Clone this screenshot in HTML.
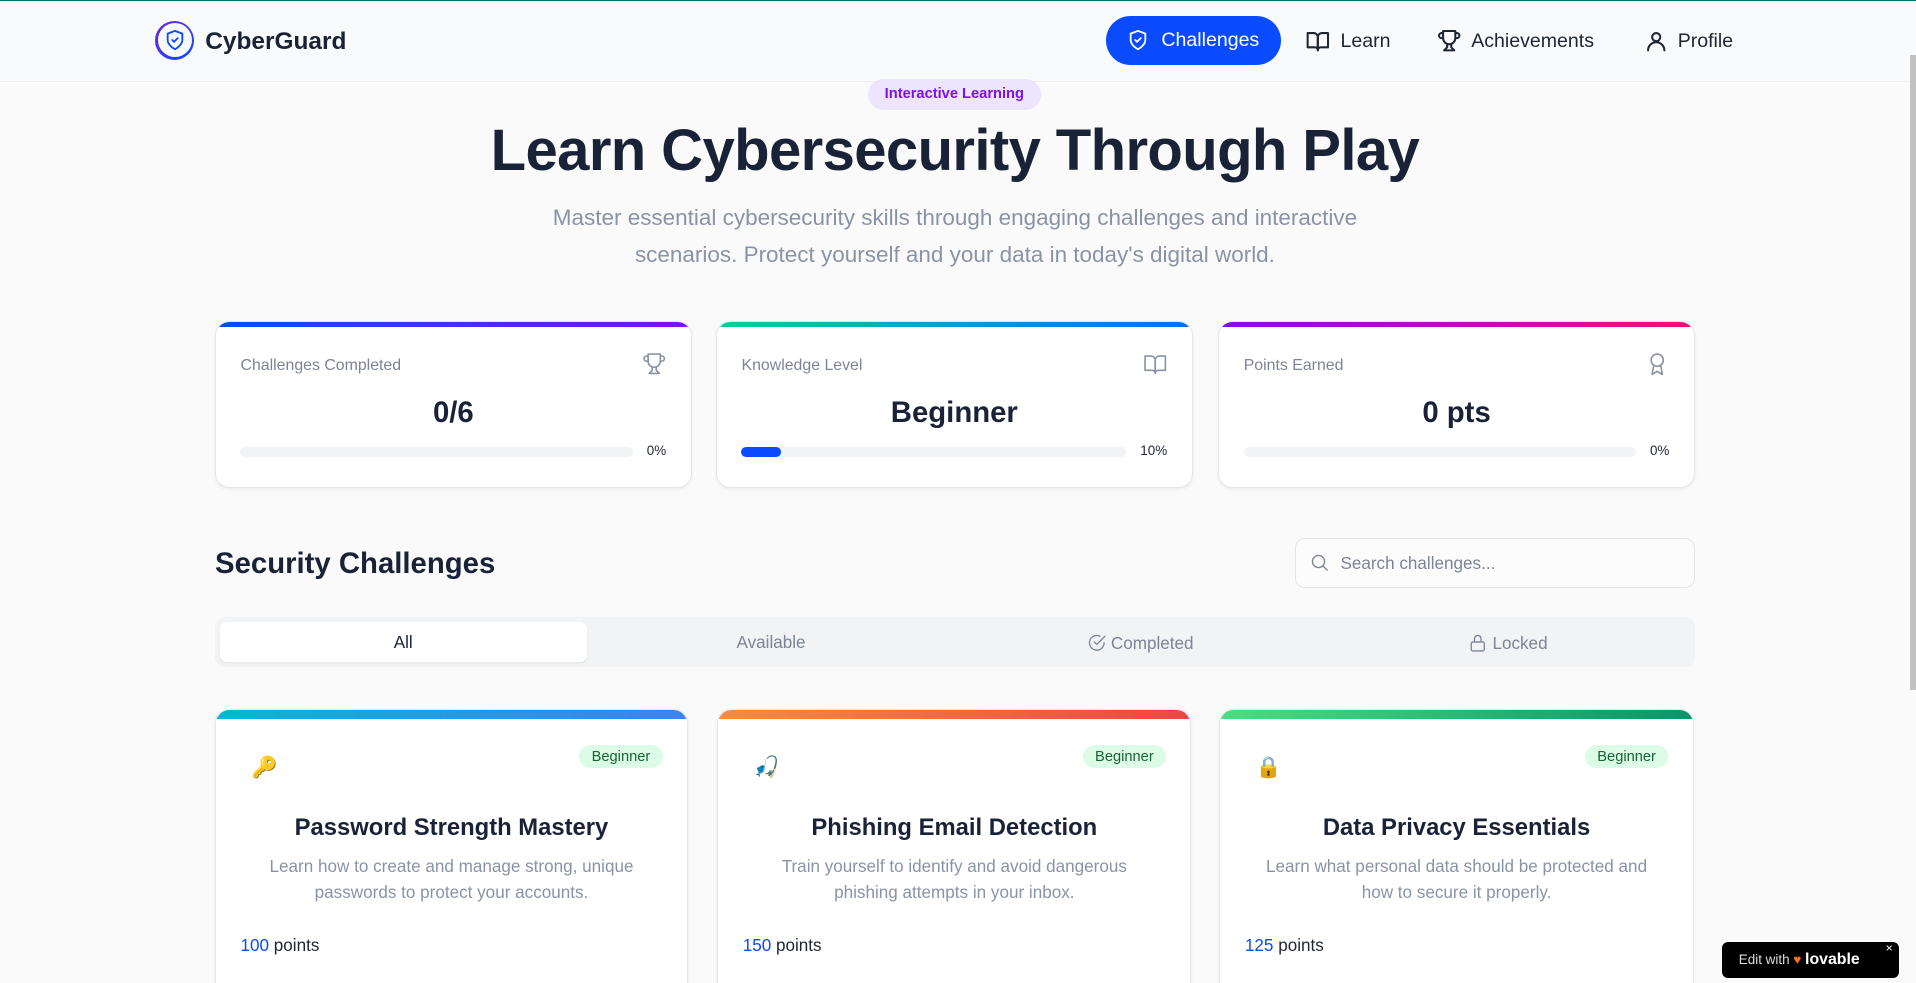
<!DOCTYPE html>
<html><head><meta charset="utf-8"><style>
html,body{margin:0;padding:0;}
html{width:1916px;height:983px;overflow:hidden;background:#fafafa;}
body{zoom:1.22194;width:1568px;height:804px;position:relative;font-family:"Liberation Sans",Arial,sans-serif;color:#1a2238;background:#fafafa;overflow:hidden;}
.abs{position:absolute;}
.hdr{left:0;top:0;width:1568px;height:67px;background:#f9fafc;border-top:1px solid #0f6b6b;border-bottom:1px solid #eceef2;box-sizing:border-box;}
.nav{display:flex;align-items:center;gap:6px;font-size:16px;color:#1f2533;}
svg.i{fill:none;stroke:currentColor;stroke-width:2;stroke-linecap:round;stroke-linejoin:round;}
.card{background:#fff;border:1px solid #e4e6ea;border-radius:12px;box-sizing:border-box;overflow:hidden;box-shadow:0 1px 3px rgba(0,0,0,.06);}
.bar{position:absolute;left:0;top:0;right:0;height:4px;}
.lbl{position:absolute;left:20px;top:28px;font-size:13px;color:#7c8496;}
.ic{position:absolute;right:20px;top:24px;color:#8a93a6;}
.val{position:absolute;left:0;right:0;top:60px;text-align:center;font-size:24px;font-weight:bold;}
.pb{position:absolute;left:20px;top:102px;width:321px;height:8px;background:#f1f3f5;border-radius:4px;overflow:hidden;}
.pct{position:absolute;right:20px;top:99px;font-size:11px;color:#1f2533;}
.cc .bar{height:8px;}
.emoji{position:absolute;left:29px;top:38px;font-size:17px;}
.badge{position:absolute;right:20px;top:29px;background:#dcfce7;color:#166534;font-size:12px;padding:3px 10px;border-radius:10px;}
.t{position:absolute;left:0;right:0;top:85px;text-align:center;font-size:19.5px;font-weight:bold;}
.d{position:absolute;left:30px;right:30px;top:118px;text-align:center;font-size:14px;line-height:21px;color:#8a93a6;}
.p{position:absolute;left:20px;top:185px;font-size:14px;color:#1f2533;}
.p b{font-weight:normal;color:#0a4bff;}
</style></head><body>
<div class="abs hdr"></div>
<div class="abs" style="left:127px;top:17px;width:32px;height:32px;border-radius:50%;background:linear-gradient(135deg,#6d28d9,#0a4bff);"></div>
<div class="abs" style="left:129px;top:19px;width:28px;height:28px;border-radius:50%;background:#f9fafc;"></div>
<svg class="abs i" style="left:134px;top:24px;color:#0a4bff" width="18" height="18" viewBox="0 0 24 24"><path d="M12 22s8-4 8-10V5l-8-3-8 3v7c0 6 8 10 8 10z"/><path d="M9 12l2 2 4-4"/></svg>
<div class="abs" style="left:168px;top:23px;font-size:20px;font-weight:bold;">CyberGuard</div>

<div class="abs nav" style="left:905px;top:13px;width:143px;height:40px;background:#0a4bff;border-radius:20px;color:#fff;justify-content:center;gap:10px;">
<svg class="i" width="18" height="18" viewBox="0 0 24 24"><path d="M12 22s8-4 8-10V5l-8-3-8 3v7c0 6 8 10 8 10z"/><path d="M9 12l2 2 4-4"/></svg>Challenges</div>
<div class="abs nav" style="left:1068px;top:24px;"><svg class="i" width="21" height="20" viewBox="0 0 24 24"><path d="M2 4h6a4 4 0 0 1 4 4v13a3 3 0 0 0-3-3H2z"/><path d="M22 4h-6a4 4 0 0 0-4 4v13a3 3 0 0 1 3-3h7z"/></svg><span style="margin-left:2px">Learn</span></div>
<div class="abs nav" style="left:1176px;top:24px;"><svg class="i" width="20" height="20" viewBox="0 0 24 24"><path d="M6 9H4.5a2.5 2.5 0 0 1 0-5H6"/><path d="M18 9h1.5a2.5 2.5 0 0 0 0-5H18"/><path d="M6 2h12v7a6 6 0 0 1-12 0z"/><path d="M10 15v3l-3 3h10l-3-3v-3"/></svg><span style="margin-left:2px">Achievements</span></div>
<div class="abs nav" style="left:1345px;top:24px;"><svg class="i" width="20" height="20" viewBox="0 0 24 24"><circle cx="12" cy="8" r="4"/><path d="M4 21a8 8 0 0 1 16 0"/></svg><span style="margin-left:2px">Profile</span></div>
<div class="abs" style="left:1563px;top:45px;width:5px;height:520px;background:#c1c1c1;"></div>

<div class="abs" style="left:710px;top:65px;width:142px;height:25px;background:#ede4fd;border-radius:13px;color:#7c10f0;font-size:12px;font-weight:bold;text-align:center;line-height:25px;">Interactive Learning</div>
<div class="abs" style="left:0;width:1563px;top:96px;text-align:center;font-size:47.5px;font-weight:bold;letter-spacing:-0.5px;">Learn Cybersecurity Through Play</div>
<div class="abs" style="left:0;width:1563px;top:164px;text-align:center;font-size:18.4px;line-height:30px;color:#8a93a6;">Master essential cybersecurity skills through engaging challenges and interactive<br>scenarios. Protect yourself and your data in today's digital world.</div>

<div class="abs card" style="left:176px;top:263px;width:390px;height:136px;"><div class="bar" style="background:linear-gradient(90deg,#0a4bff,#7c10f0)"></div>
<div class="lbl">Challenges Completed</div>
<svg class="ic i" style="stroke-width:1.6" width="20" height="20" viewBox="0 0 24 24"><path d="M6 9H4.5a2.5 2.5 0 0 1 0-5H6"/><path d="M18 9h1.5a2.5 2.5 0 0 0 0-5H18"/><path d="M6 2h12v7a6 6 0 0 1-12 0z"/><path d="M10 15v3l-3 3h10l-3-3v-3"/></svg>
<div class="val">0/6</div><div class="pb"></div><div class="pct">0%</div></div>

<div class="abs card" style="left:586px;top:263px;width:390px;height:136px;"><div class="bar" style="background:linear-gradient(90deg,#00d492,#0a6bff)"></div>
<div class="lbl">Knowledge Level</div>
<svg class="ic i" style="stroke-width:1.6" width="20" height="20" viewBox="0 0 24 24"><path d="M2 4h6a4 4 0 0 1 4 4v13a3 3 0 0 0-3-3H2z"/><path d="M22 4h-6a4 4 0 0 0-4 4v13a3 3 0 0 1 3-3h7z"/></svg>
<div class="val">Beginner</div><div class="pb" style="width:315px"><div style="width:32px;height:8px;background:#0a4bff;border-radius:4px"></div></div><div class="pct">10%</div></div>

<div class="abs card" style="left:997px;top:263px;width:390px;height:136px;"><div class="bar" style="background:linear-gradient(90deg,#7c10f0,#ff0a78)"></div>
<div class="lbl">Points Earned</div>
<svg class="ic i" style="stroke-width:1.6" width="20" height="20" viewBox="0 0 24 24"><circle cx="12" cy="8" r="6"/><path d="M15.5 13.5L17 22l-5-3-5 3 1.5-8.5"/></svg>
<div class="val">0 pts</div><div class="pb"></div><div class="pct">0%</div></div>

<div class="abs" style="left:176px;top:448px;font-size:24px;font-weight:bold;">Security Challenges</div>
<div class="abs" style="left:1060px;top:440px;width:327px;height:41px;border:1px solid #e2e5ea;border-radius:8px;box-sizing:border-box;background:#fcfcfd;"></div>
<svg class="abs i" style="left:1071px;top:452px;color:#7c8496;stroke-width:1.6" width="17" height="17" viewBox="0 0 24 24"><circle cx="11" cy="11" r="7"/><path d="M21 21l-5-5"/></svg>
<div class="abs" style="left:1097px;top:453px;font-size:14px;color:#7c8496;">Search challenges...</div>

<div class="abs" style="left:176px;top:505px;width:1211px;height:41px;background:#f1f3f5;border-radius:8px;"></div>
<div class="abs" style="left:180px;top:509px;width:300px;height:33px;background:#fff;border-radius:6px;box-shadow:0 1px 2px rgba(0,0,0,.06);"></div>
<div class="abs" style="left:180px;top:518px;width:300px;text-align:center;font-size:14px;">All</div>
<div class="abs" style="left:480px;top:518px;width:302px;text-align:center;font-size:14px;color:#7c8496;">Available</div>
<div class="abs" style="left:782px;top:518px;width:302px;text-align:center;font-size:14px;color:#7c8496;"><svg class="i" style="vertical-align:-3px;stroke-width:1.6" width="16" height="16" viewBox="0 0 24 24"><path d="M21 12a9 9 0 1 1-5-8"/><path d="M9 11l3 3L22 4"/></svg> Completed</div>
<div class="abs" style="left:1084px;top:518px;width:300px;text-align:center;font-size:14px;color:#7c8496;"><svg class="i" style="vertical-align:-3px;stroke-width:1.6" width="16" height="16" viewBox="0 0 24 24"><rect x="4" y="11" width="16" height="11" rx="2"/><path d="M8 11V7a4 4 0 0 1 8 0v4"/></svg> Locked</div>

<div class="abs card cc" style="left:176px;top:580px;width:387px;height:240px;"><div class="bar" style="background:linear-gradient(90deg,#06b6d4,#3b82f6)"></div>
<div class="emoji">🔑</div><div class="badge">Beginner</div><div class="t">Password Strength Mastery</div>
<div class="d">Learn how to create and manage strong, unique passwords to protect your accounts.</div><div class="p"><b>100</b> points</div></div>
<div class="abs card cc" style="left:587px;top:580px;width:388px;height:240px;"><div class="bar" style="background:linear-gradient(90deg,#fb8c3c,#ef4444)"></div>
<div class="emoji">🎣</div><div class="badge">Beginner</div><div class="t">Phishing Email Detection</div>
<div class="d">Train yourself to identify and avoid dangerous phishing attempts in your inbox.</div><div class="p"><b>150</b> points</div></div>
<div class="abs card cc" style="left:998px;top:580px;width:388px;height:240px;"><div class="bar" style="background:linear-gradient(90deg,#4ade80,#059669)"></div>
<div class="emoji">🔒</div><div class="badge">Beginner</div><div class="t">Data Privacy Essentials</div>
<div class="d">Learn what personal data should be protected and how to secure it properly.</div><div class="p"><b>125</b> points</div></div>

<div class="abs" style="left:1409px;top:771px;width:145px;height:29px;background:#000;border-radius:5px;color:#fff;font-size:11px;line-height:29px;"><span style="margin-left:14px;color:#ddd">Edit with</span> <span style="color:#f97316">♥</span> <b style="font-size:13px">lovable</b><span style="position:absolute;right:5px;top:-9px;font-size:10px">×</span></div>
</body></html>
